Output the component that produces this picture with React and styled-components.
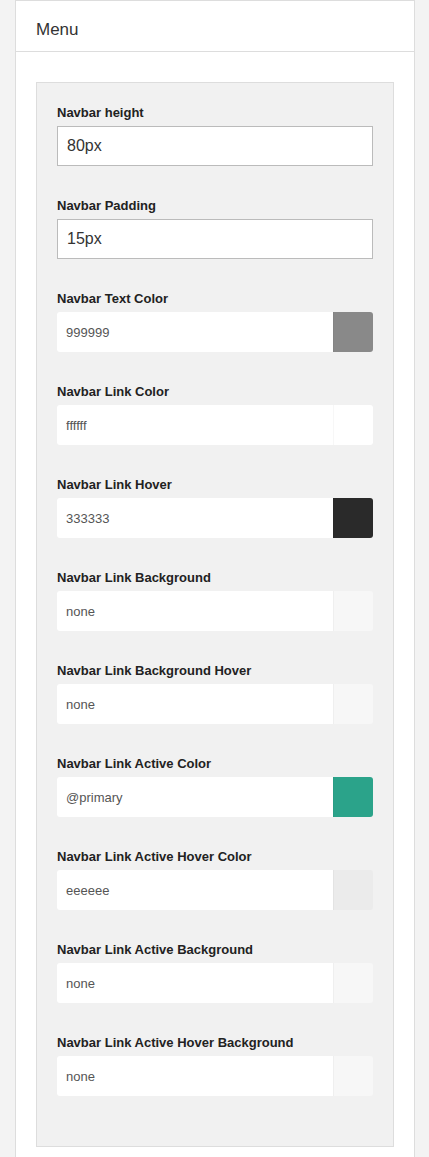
import styled, { createGlobalStyle } from 'styled-components';

const GlobalStyle = createGlobalStyle`
  html, body {
    margin: 0;
    padding: 0;
    background: #f3f3f3;
    font-family: 'Liberation Sans', Arial, sans-serif;
  }
`;

const textFields = [
  { label: 'Navbar height', value: '80px' },
  { label: 'Navbar Padding', value: '15px' },
];

const colorFields = [
  { label: 'Navbar Text Color', value: '999999', swatch: '#898989' },
  { label: 'Navbar Link Color', value: 'ffffff', swatch: '#ffffff' },
  { label: 'Navbar Link Hover', value: '333333', swatch: '#2a2a2a' },
  { label: 'Navbar Link Background', value: 'none', swatch: '#f7f7f7' },
  { label: 'Navbar Link Background Hover', value: 'none', swatch: '#f7f7f7' },
  { label: 'Navbar Link Active Color', value: '@primary', swatch: '#2ba38a' },
  { label: 'Navbar Link Active Hover Color', value: 'eeeeee', swatch: '#ebebeb' },
  { label: 'Navbar Link Active Background', value: 'none', swatch: '#f7f7f7' },
  { label: 'Navbar Link Active Hover Background', value: 'none', swatch: '#f7f7f7' },
];

export default function App() {
  return (
    <>
      <GlobalStyle />
      <Page>
        <Panel>
          <PanelHeader>Menu</PanelHeader>
          <PanelBody>
            <Settings>
              {textFields.map((f) => (
                <Field key={f.label}>
                  <Label>{f.label}</Label>
                  <TextInput defaultValue={f.value} />
                </Field>
              ))}
              {colorFields.map((f) => (
                <Field key={f.label}>
                  <Label>{f.label}</Label>
                  <ColorRow>
                    <ColorInput defaultValue={f.value} />
                    <Swatch $color={f.swatch} />
                  </ColorRow>
                </Field>
              ))}
            </Settings>
          </PanelBody>
        </Panel>
      </Page>
    </>
  );
}

const Page = styled.div`
  padding-left: 15px;
  height: 1157px;
  overflow: hidden;
`;

const Panel = styled.div`
  width: 398px;
  background: #ffffff;
  border: 1px solid #dddddd;
`;

const PanelHeader = styled.div`
  height: 51px;
  padding: 7px 20px 0;
  box-sizing: border-box;
  display: flex;
  align-items: center;
  border-bottom: 1px solid #dddddd;
  font-size: 17px;
  color: #333333;
`;

const PanelBody = styled.div`
  padding: 30px 20px 20px;
`;

const Settings = styled.div`
  background: #f1f1f1;
  border: 1px solid #dddddd;
  padding: 20px 20px 20px;
`;

const Field = styled.div`
  margin-bottom: 30px;
`;

const Label = styled.label`
  display: block;
  font-size: 13px;
  font-weight: bold;
  line-height: 20px;
  color: #222222;
  margin-bottom: 3px;
`;

const TextInput = styled.input`
  display: block;
  box-sizing: border-box;
  width: 316px;
  height: 40px;
  padding: 0 9px;
  border: 1px solid #bbbbbb;
  background: #ffffff;
  font-family: 'Liberation Sans', Arial, sans-serif;
  font-size: 16px;
  color: #333333;
  outline: none;
`;

const ColorRow = styled.div`
  display: flex;
  width: 316px;
  height: 40px;
  border-radius: 3px;
  overflow: hidden;
`;

const ColorInput = styled.input`
  flex: 1;
  min-width: 0;
  box-sizing: border-box;
  height: 40px;
  padding: 0 9px;
  border: none;
  background: #ffffff;
  font-family: 'Liberation Sans', Arial, sans-serif;
  font-size: 13px;
  color: #555555;
  outline: none;
`;

const Swatch = styled.div`
  width: 40px;
  height: 40px;
  box-sizing: border-box;
  border-left: 1px solid rgba(0, 0, 0, 0.03);
  background: ${(p) => p.$color};
`;
